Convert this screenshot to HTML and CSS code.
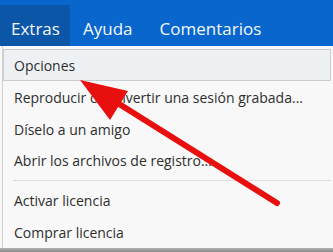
FILE: index.html
```html
<!DOCTYPE html>
<html lang="es">
<head>
<meta charset="utf-8">
<link rel="stylesheet" href="styles.css">
</head>
<body>
<nav class="menubar">
  <span class="tab active">Extras</span>
  <span class="tab">Ayuda</span>
  <span class="tab">Comentarios</span>
</nav>
<div class="menu">
  <div class="item hover">Opciones</div>
  <div class="item">Reproducir o convertir una sesión grabada...</div>
  <div class="item">Díselo a un amigo</div>
  <div class="item">Abrir los archivos de registro...</div>
  <div class="sep"></div>
  <div class="item">Activar licencia</div>
  <div class="item">Comprar licencia</div>
</div>
<div class="bottom"></div>
<svg class="arrow" width="333" height="252" viewBox="0 0 333 252">
  <line x1="277" y1="203" x2="108" y2="97" stroke="#e8100f" stroke-width="6" stroke-linecap="round"/>
  <polygon points="80,80 128,91 110,120" fill="#e8100f"/>
</svg>
</body>
</html>
```
FILE: styles.css
```css
html, body {
  margin: 0;
  padding: 0;
  width: 333px;
  height: 252px;
  overflow: hidden;
  background: #f8f8f8;
  font-family: "Open Sans", "Noto Sans", sans-serif;
  position: relative;
}
.menubar {
  height: 46px;
  background: #0866cc;
  display: flex;
  align-items: flex-end;
  box-sizing: border-box;
  padding-top: 5px;
}
.tab {
  height: 41px;
  display: flex;
  align-items: center;
  padding: 6px 14px 0 13px;
  color: #f4f8fd;
  font-size: 17px;
  box-sizing: border-box;
}
.tab.active {
  background: #0b56a7;
  width: 70px;
  padding-left: 11px;
}
.menu {
  margin-left: 2px;
  width: 329px;
  height: 202px;
  box-sizing: border-box;
  border-left: 1px solid #d0d0d0;
  background: #f8f8f8;
  padding-top: 3px;
  color: #2e2e2e;
  font-size: 14px;
}
.item {
  height: 31.5px;
  line-height: 33px;
  padding-left: 11px;
  box-sizing: border-box;
  white-space: nowrap;
}
.item.hover {
  height: 32px;
  background: #eef1f4;
  border: 1px solid #c9cdd2;
  line-height: 32px;
  padding-left: 10px;
}
.sep {
  height: 1px;
  background: #dcdcdc;
  margin: 4px 0 3.5px 10px;
}
.bottom {
  height: 4px;
  background: linear-gradient(#b0b0b0, #8a8a8a);
}
.arrow {
  position: absolute;
  left: 0;
  top: 0;
}
```
